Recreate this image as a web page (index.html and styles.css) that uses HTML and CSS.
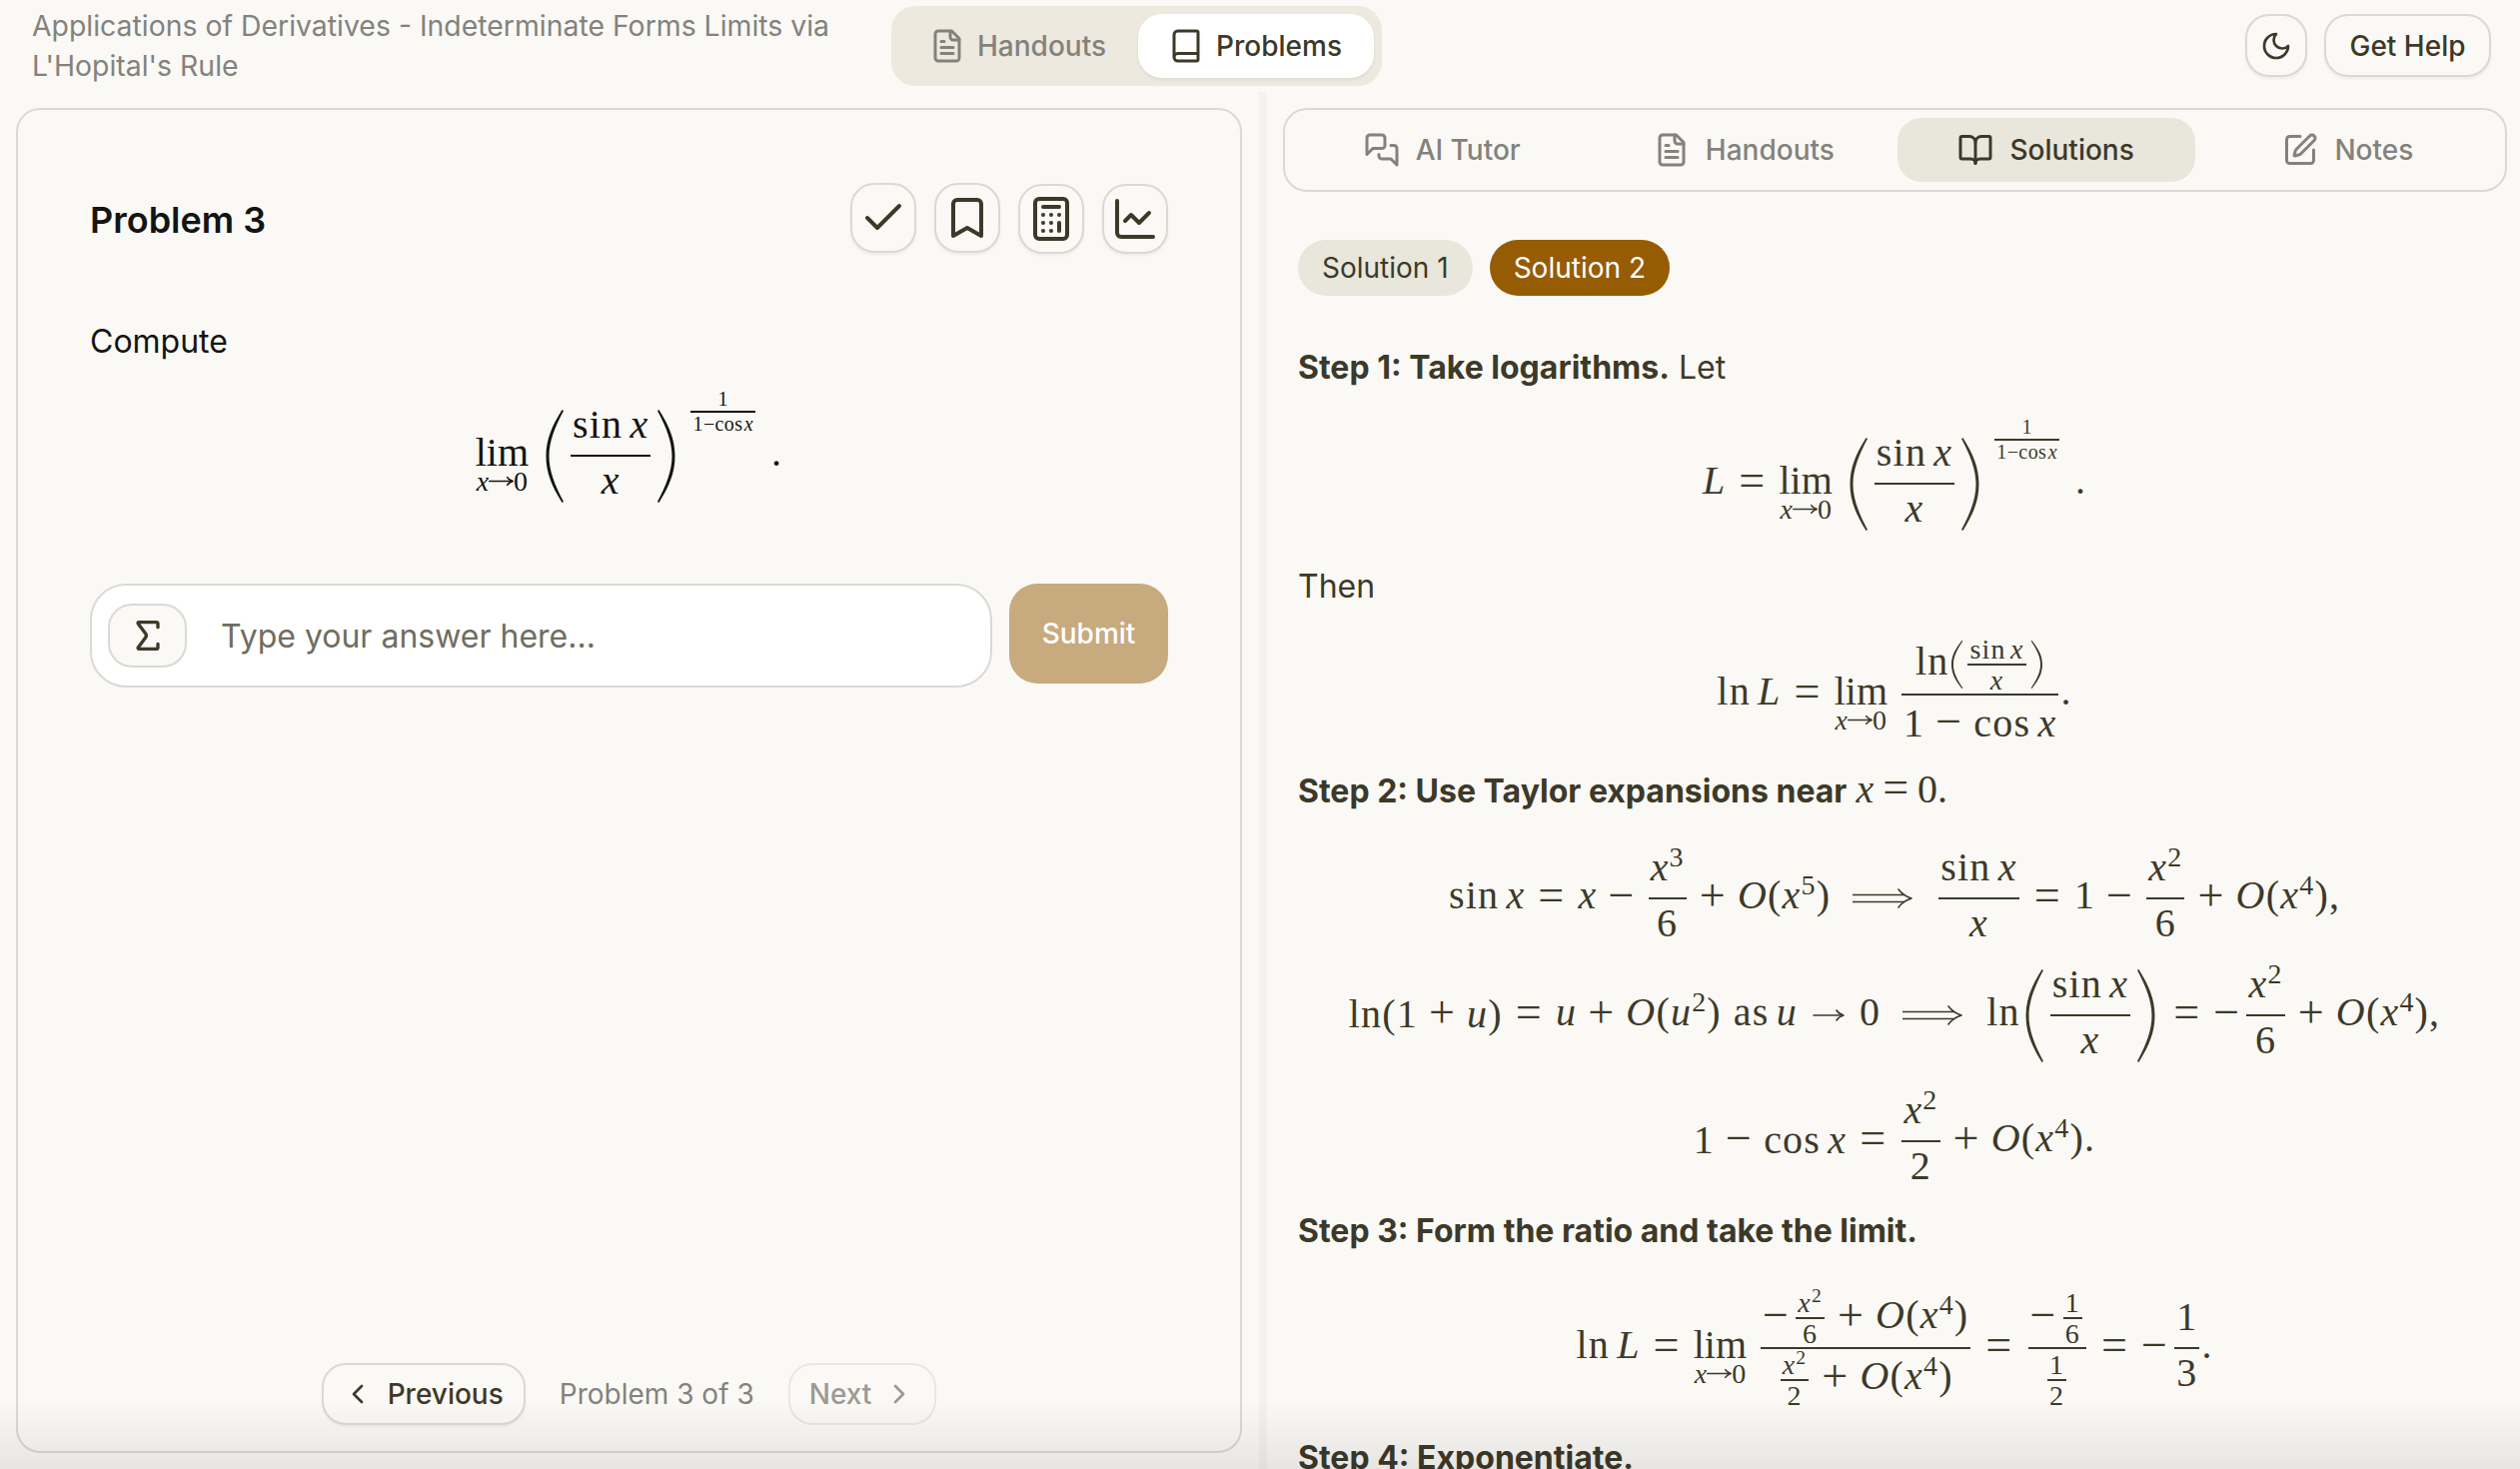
FILE: index.html
```html
<!DOCTYPE html>
<html lang="en">
<head>
    <meta charset="UTF-8">
    <meta name="viewport" content="width=device-width, initial-scale=1.0">
    <title>Problems</title>
    <link rel="stylesheet" href="styles.css">
</head>
<body>
    <!-- icon set -->
    <svg class="sprite" aria-hidden="true">
        <symbol id="i-file" viewBox="0 0 24 24"><path d="M15 2H6a2 2 0 0 0-2 2v16a2 2 0 0 0 2 2h12a2 2 0 0 0 2-2V7Z"/><path d="M14 2v4a2 2 0 0 0 2 2h4"/><path d="M10 9H8"/><path d="M16 13H8"/><path d="M16 17H8"/></symbol>
        <symbol id="i-book" viewBox="0 0 24 24"><path d="M4 19.5v-15A2.5 2.5 0 0 1 6.5 2H19a1 1 0 0 1 1 1v18a1 1 0 0 1-1 1H6.5a1 1 0 0 1 0-5H20"/></symbol>
        <symbol id="i-chat" viewBox="0 0 24 24"><path d="M14 9a2 2 0 0 1-2 2H6l-4 4V4a2 2 0 0 1 2-2h8a2 2 0 0 1 2 2z"/><path d="M18 9h2a2 2 0 0 1 2 2v11l-4-4h-6a2 2 0 0 1-2-2v-1"/></symbol>
        <symbol id="i-open" viewBox="0 0 24 24"><path d="M12 7v14"/><path d="M3 18a1 1 0 0 1-1-1V4a1 1 0 0 1 1-1h5a4 4 0 0 1 4 4 4 4 0 0 1 4-4h5a1 1 0 0 1 1 1v13a1 1 0 0 1-1 1h-6a3 3 0 0 0-3 3 3 3 0 0 0-3-3z"/></symbol>
        <symbol id="i-pen" viewBox="0 0 24 24"><path d="M12 3H5a2 2 0 0 0-2 2v14a2 2 0 0 0 2 2h14a2 2 0 0 0 2-2v-7"/><path d="M18.375 2.625a1 1 0 0 1 3 3l-9.013 9.014a2 2 0 0 1-.853.505l-2.873.84a.5.5 0 0 1-.62-.62l.84-2.873a2 2 0 0 1 .506-.852z"/></symbol>
        <symbol id="i-moon" viewBox="0 0 24 24"><path d="M12 3a6 6 0 0 0 9 9 9 9 0 1 1-9-9Z"/></symbol>
        <symbol id="i-check" viewBox="0 0 24 24"><path d="M20 6 9 17l-5-5"/></symbol>
        <symbol id="i-bookmark" viewBox="0 0 24 24"><path d="m19 21-7-4-7 4V5a2 2 0 0 1 2-2h10a2 2 0 0 1 2 2v16z"/></symbol>
        <symbol id="i-calc" viewBox="0 0 24 24"><rect x="4" y="2" width="16" height="20" rx="2"/><path d="M8 6h8"/><path d="M16 14v4"/><path d="M16 10h.01"/><path d="M12 10h.01"/><path d="M8 10h.01"/><path d="M12 14h.01"/><path d="M8 14h.01"/><path d="M12 18h.01"/><path d="M8 18h.01"/></symbol>
        <symbol id="i-chart" viewBox="0 0 24 24"><path d="M3 3v16a2 2 0 0 0 2 2h16"/><path d="m19 9-5 5-4-4-3 3"/></symbol>
        <symbol id="i-sigma" viewBox="0 0 24 24"><path d="M18 7V5a1 1 0 0 0-1-1H6.5a.5.5 0 0 0-.4.8l4.5 6a2 2 0 0 1 0 2.4l-4.5 6a.5.5 0 0 0 .4.8H17a1 1 0 0 0 1-1v-2"/></symbol>
        <symbol id="i-left" viewBox="0 0 24 24"><path d="m15 18-6-6 6-6"/></symbol>
        <symbol id="i-right" viewBox="0 0 24 24"><path d="m9 18 6-6-6-6"/></symbol>
        <symbol id="paren" viewBox="0 0 20 93" preserveAspectRatio="none"><path d="M17.500 0C7 17 1.500 30 1.500 46.500S7 76 17.500 93L19 92C10 75 4.500 61 4.500 46.500S10 18 19 1Z"/></symbol>
        <symbol id="implies" viewBox="0 0 60 22"><path d="M0 7.500h52M0 14.500h52"/><path d="M46 2c3 4 8 7.500 13 9-5 1.500-10 5-13 9"/></symbol>
        <symbol id="to" viewBox="0 0 32 14"><path d="M1 7h29"/><path d="M24 2c1.500 2.500 3.500 4 7 5-3.500 1-5.500 2.500-7 5"/></symbol>
    </svg>

    <header class="topbar">
        <div class="crumb">Applications of Derivatives - Indeterminate Forms Limits via L'Hopital's Rule</div>
        <div class="segment">
            <button class="segment-item"><svg class="ico"><use href="#i-file"/></svg>Handouts</button>
            <button class="segment-item active"><svg class="ico"><use href="#i-book"/></svg>Problems</button>
        </div>
        <div class="top-actions">
            <button class="btn btn-icon-top"><svg class="ico ico-moon"><use href="#i-moon"/></svg></button>
            <button class="btn btn-help">Get Help</button>
        </div>
    </header>

    <main class="workspace">
        <section class="col-left">
            <div class="problem-card">
                <div class="problem-head">
                    <h2>Problem 3</h2>
                    <div class="tools">
                        <button class="tool"><svg class="ico-lg"><use href="#i-check"/></svg></button>
                        <button class="tool"><svg class="ico-lg"><use href="#i-bookmark"/></svg></button>
                        <button class="tool tool-low"><svg class="ico-lg"><use href="#i-calc"/></svg></button>
                        <button class="tool tool-low"><svg class="ico-lg"><use href="#i-chart"/></svg></button>
                    </div>
                </div>
                <p class="compute">Compute</p>
                <div class="eq eq-problem">
                    <span class="math math-black">
                        <span class="lim"><span class="lim-top">lim</span><span class="lim-sub"><i>x</i><svg class="to-sm"><use href="#to"/></svg>0</span></span>
                        <svg class="big-paren"><use href="#paren"/></svg>
                        <span class="frac"><span class="num"><span class="t">sin <i>x</i></span></span><span class="bar"></span><span class="den"><i>x</i></span></span>
                        <svg class="big-paren flip"><use href="#paren"/></svg>
                        <span class="frac exp"><span class="num">1</span><span class="bar"></span><span class="den">1−cos <i>x</i></span></span>
                        <span class="t dot-end">.</span>
                    </span>
                </div>
                <div class="answer-row">
                    <div class="answer-box">
                        <button class="sigma"><svg class="ico-sigma"><use href="#i-sigma"/></svg></button>
                        <span class="placeholder">Type your answer here...</span>
                    </div>
                    <button class="submit">Submit</button>
                </div>
                <nav class="pager">
                    <button class="btn btn-page btn-prev"><svg class="ico-chev"><use href="#i-left"/></svg>Previous</button>
                    <span class="pager-label">Problem 3 of 3</span>
                    <button class="btn btn-page btn-off">Next<svg class="ico-chev"><use href="#i-right"/></svg></button>
                </nav>
            </div>
        </section>

        <div class="divider"></div>

        <section class="col-right">
            <div class="tabs">
                <button class="tab"><svg class="ico"><use href="#i-chat"/></svg>AI Tutor</button>
                <button class="tab"><svg class="ico"><use href="#i-file"/></svg>Handouts</button>
                <button class="tab active"><svg class="ico"><use href="#i-open"/></svg>Solutions</button>
                <button class="tab"><svg class="ico"><use href="#i-pen"/></svg>Notes</button>
            </div>
            <div class="solution">
                <div class="pills">
                    <button class="pill">Solution 1</button>
                    <button class="pill active">Solution 2</button>
                </div>

                <p class="line line-first"><b>Step 1: Take logarithms.</b> Let</p>

                <div class="eq eq-1">
                    <span class="math">
                        <span class="t"><i>L</i></span><span class="t rel">=</span>
                        <span class="lim"><span class="lim-top">lim</span><span class="lim-sub"><i>x</i><svg class="to-sm"><use href="#to"/></svg>0</span></span>
                        <svg class="big-paren"><use href="#paren"/></svg>
                        <span class="frac"><span class="num"><span class="t">sin <i>x</i></span></span><span class="bar"></span><span class="den"><i>x</i></span></span>
                        <svg class="big-paren flip"><use href="#paren"/></svg>
                        <span class="frac exp"><span class="num">1</span><span class="bar"></span><span class="den">1−cos <i>x</i></span></span>
                        <span class="t dot-end">.</span>
                    </span>
                </div>

                <p class="line">Then</p>

                <div class="eq eq-2">
                    <span class="math">
                        <span class="t">ln <i>L</i></span><span class="t rel">=</span>
                        <span class="lim"><span class="lim-top">lim</span><span class="lim-sub"><i>x</i><svg class="to-sm"><use href="#to"/></svg>0</span></span>
                        <span class="frac frac-main">
                            <span class="num row"><span class="t">ln</span><svg class="mid-paren"><use href="#paren"/></svg><span class="frac sm"><span class="num">sin <i>x</i></span><span class="bar"></span><span class="den"><i>x</i></span></span><svg class="mid-paren flip"><use href="#paren"/></svg></span>
                            <span class="bar"></span>
                            <span class="den row"><span class="t">1<span class="bin">−</span>cos <i>x</i></span></span>
                        </span>
                        <span class="t">.</span>
                    </span>
                </div>

                <p class="line line-step2"><b>Step 2: Use Taylor expansions near</b> <span class="inline-math"><i>x</i><span class="inline-rel">=</span>0.</span></p>

                <div class="eq eq-r1">
                    <span class="math">
                        <span class="t">sin <i>x</i></span><span class="t rel">=</span><span class="t"><i>x</i></span><span class="t bin">−</span>
                        <span class="frac"><span class="num"><i>x</i><sup>3</sup></span><span class="bar"></span><span class="den">6</span></span>
                        <span class="t bin">+</span><span class="t"><i>O</i>(<i>x</i><sup>5</sup>)</span>
                        <svg class="implies"><use href="#implies"/></svg>
                        <span class="frac"><span class="num"><span class="t">sin <i>x</i></span></span><span class="bar"></span><span class="den"><i>x</i></span></span>
                        <span class="t rel">=</span><span class="t">1</span><span class="t bin">−</span>
                        <span class="frac"><span class="num"><i>x</i><sup>2</sup></span><span class="bar"></span><span class="den">6</span></span>
                        <span class="t bin">+</span><span class="t"><i>O</i>(<i>x</i><sup>4</sup>),</span>
                    </span>
                </div>

                <div class="eq eq-r2">
                    <span class="math">
                        <span class="t">ln(1<span class="bin">+</span><i>u</i>)</span><span class="t rel">=</span><span class="t"><i>u</i></span><span class="t bin">+</span><span class="t"><i>O</i>(<i>u</i><sup>2</sup>)</span>
                        <span class="t as">as <i>u</i></span><svg class="to"><use href="#to"/></svg><span class="t">0</span>
                        <svg class="implies"><use href="#implies"/></svg>
                        <span class="t">ln</span><svg class="big-paren"><use href="#paren"/></svg>
                        <span class="frac"><span class="num"><span class="t">sin <i>x</i></span></span><span class="bar"></span><span class="den"><i>x</i></span></span>
                        <svg class="big-paren flip"><use href="#paren"/></svg>
                        <span class="t rel">=</span><span class="t neg">−</span>
                        <span class="frac"><span class="num"><i>x</i><sup>2</sup></span><span class="bar"></span><span class="den">6</span></span>
                        <span class="t bin">+</span><span class="t"><i>O</i>(<i>x</i><sup>4</sup>),</span>
                    </span>
                </div>

                <div class="eq eq-r3">
                    <span class="math">
                        <span class="t">1<span class="bin">−</span>cos <i>x</i></span><span class="t rel">=</span>
                        <span class="frac"><span class="num"><i>x</i><sup>2</sup></span><span class="bar"></span><span class="den">2</span></span>
                        <span class="t bin">+</span><span class="t"><i>O</i>(<i>x</i><sup>4</sup>).</span>
                    </span>
                </div>

                <p class="line line-step3"><b>Step 3: Form the ratio and take the limit.</b></p>

                <div class="eq eq-3">
                    <span class="math">
                        <span class="t">ln <i>L</i></span><span class="t rel">=</span>
                        <span class="lim"><span class="lim-top">lim</span><span class="lim-sub"><i>x</i><svg class="to-sm"><use href="#to"/></svg>0</span></span>
                        <span class="frac frac-main">
                            <span class="num row"><span class="t neg">−</span><span class="frac sm"><span class="num"><i>x</i><sup>2</sup></span><span class="bar"></span><span class="den">6</span></span><span class="t bin">+</span><span class="t"><i>O</i>(<i>x</i><sup>4</sup>)</span></span>
                            <span class="bar"></span>
                            <span class="den row"><span class="frac sm"><span class="num"><i>x</i><sup>2</sup></span><span class="bar"></span><span class="den">2</span></span><span class="t bin">+</span><span class="t"><i>O</i>(<i>x</i><sup>4</sup>)</span></span>
                        </span>
                        <span class="t rel">=</span>
                        <span class="frac frac-main">
                            <span class="num row"><span class="t neg">−</span><span class="frac sm"><span class="num">1</span><span class="bar"></span><span class="den">6</span></span></span>
                            <span class="bar"></span>
                            <span class="den row"><span class="frac sm"><span class="num">1</span><span class="bar"></span><span class="den">2</span></span></span>
                        </span>
                        <span class="t rel">=</span><span class="t neg">−</span>
                        <span class="frac"><span class="num">1</span><span class="bar"></span><span class="den">3</span></span>
                        <span class="t">.</span>
                    </span>
                </div>

                <p class="line line-step4"><b>Step 4: Exponentiate.</b></p>
            </div>
        </section>
    </main>

    <div class="bottom-fade"></div>
</body>
</html>
```

FILE: styles.css
```css
* {
    box-sizing: border-box;
}

html, body {
    height: 100%;
}

body {
    margin: 0;
    height: 100vh;
    overflow: hidden;
    display: flex;
    flex-direction: column;
    background: #faf9f5;
    color: #3d3929;
    font-family: Inter, "Noto Sans", sans-serif;
}

button {
    font-family: inherit;
    border: none;
    background: none;
    color: inherit;
    padding: 0;
}

svg {
    fill: none;
    stroke: currentColor;
    stroke-linecap: round;
    stroke-linejoin: round;
    stroke-width: 2;
    flex: none;
}

.sprite {
    display: none;
}

/* top bar */
.topbar {
    height: 92px;
    flex: none;
    display: flex;
    align-items: flex-start;
    padding: 6px 29px 0 32px;
}

.crumb {
    width: 860px;
    padding-right: 20px;
    font-size: 28.400px;
    line-height: 40px;
    color: #83827d;
}

.segment {
    display: flex;
    height: 80px;
    padding: 8px;
    border-radius: 24px;
    background: #ede9de;
}

.segment-item {
    display: flex;
    align-items: center;
    gap: 12px;
    padding: 0 32px 0 30px;
    border-radius: 24px;
    font-size: 28px;
    font-weight: 500;
    color: #83827d;
}

.segment-item.active {
    background: #fff;
    color: #3d3929;
    box-shadow: 0 2px 3px rgba(0, 0, 0, .06);
}

.ico {
    width: 36px;
    height: 36px;
}

.top-actions {
    margin-left: auto;
    display: flex;
    gap: 17px;
    padding-top: 8px;
}

.btn {
    border: 2px solid #dad9d4;
    border-radius: 24px;
    background: #faf9f5;
    box-shadow: 0 2px 3px rgba(0, 0, 0, .05);
    font-weight: 500;
}

.btn-icon-top {
    width: 62px;
    height: 63px;
    display: flex;
    align-items: center;
    justify-content: center;
}

.ico-moon {
    width: 32px;
    height: 32px;
}

.btn-help {
    width: 167px;
    height: 63px;
    font-size: 28px;
}

/* two columns */
.workspace {
    flex: 1;
    min-height: 0;
    display: grid;
    grid-template-columns: 1260px 8px 1fr;
}

.col-left {
    padding: 16px 17px 16px 16px;
    min-height: 0;
}

.divider {
    background: #f3f2ee;
}

.col-right {
    padding: 16px 13px 0 16px;
    min-height: 0;
    overflow: hidden;
}

/* left card */
.problem-card {
    height: 100%;
    display: flex;
    flex-direction: column;
    padding: 73px 72px 26px 72px;
    border: 2px solid #dad9d4;
    border-radius: 24px;
    color: #141413;
}

.problem-head {
    display: flex;
    align-items: flex-start;
    justify-content: space-between;
}

.problem-head h2 {
    margin: 10px 0 0;
    font-size: 36px;
    line-height: 54px;
    font-weight: 600;
}

.tools {
    display: flex;
    gap: 18px;
    color: #3d3929;
}

.tool {
    width: 66px;
    height: 70px;
    border: 2px solid #dad9d4;
    border-radius: 24px;
    background: #faf9f5;
    box-shadow: 0 2px 3px rgba(0, 0, 0, .05);
    display: flex;
    align-items: center;
    justify-content: center;
}

.tool-low {
    margin-top: 1px;
}

.ico-lg {
    width: 48px;
    height: 48px;
}

.compute {
    margin: 64px 0 0;
    font-size: 32px;
    line-height: 48px;
}

.eq-problem {
    margin-top: 26px;
    height: 128px;
}

.answer-row {
    display: flex;
    align-items: flex-start;
    gap: 17px;
    margin-top: 64px;
}

.answer-box {
    flex: 1;
    height: 104px;
    display: flex;
    align-items: center;
    gap: 34px;
    padding-left: 16px;
    border: 2px solid #dad9d4;
    border-radius: 36px;
    background: #fff;
}

.sigma {
    width: 79px;
    height: 64px;
    border: 2px solid #dad9d4;
    border-radius: 24px;
    background: #faf9f5;
    color: #3d3929;
    display: flex;
    align-items: center;
    justify-content: center;
}

.ico-sigma {
    width: 40px;
    height: 40px;
}

.placeholder {
    font-size: 32px;
    color: #6f6d62;
}

.submit {
    width: 159px;
    height: 100px;
    border-radius: 28px;
    background: #c8aa7f;
    color: #fff;
    font-size: 28px;
    font-weight: 500;
}

.pager {
    margin-top: auto;
    display: flex;
    align-items: center;
    justify-content: center;
    gap: 34px;
    color: #3d3929;
}

.btn-page {
    height: 62px;
    display: flex;
    align-items: center;
    gap: 12px;
    padding: 0 19px;
    font-size: 28px;
    color: #3d3929;
}

.btn-prev {
    gap: 14px;
    padding: 0 20px 0 18px;
}

.btn-off {
    color: #9b9a92;
    border-color: #e8e7e2;
    box-shadow: none;
}

.ico-chev {
    width: 32px;
    height: 32px;
}

.pager-label {
    font-size: 28px;
    color: #83827d;
}

/* right side */
.tabs {
    display: grid;
    grid-template-columns: repeat(4, 1fr);
    gap: 4px;
    height: 84px;
    padding: 8px;
    border: 2px solid #dad9d4;
    border-radius: 24px;
}

.tab {
    display: flex;
    align-items: center;
    justify-content: center;
    gap: 16px;
    border-radius: 24px;
    font-size: 28px;
    font-weight: 500;
    color: #83827d;
}

.tab.active {
    background: #e9e6dc;
    color: #3d3929;
}

.solution {
    padding: 0 16px 0 15px;
}

.pills {
    display: flex;
    gap: 17px;
    margin-top: 48px;
}

.pill {
    height: 56px;
    padding: 0 24px;
    border-radius: 28px;
    background: #e9e6dc;
    font-size: 28px;
}

.pill.active {
    background: #955c04;
    color: #fff;
}

.line {
    margin: 0;
    font-size: 32px;
    line-height: 48px;
}

.line b {
    font-weight: 700;
}

.line-first {
    margin-top: 48px;
}

.inline-math {
    font-family: "Liberation Serif", serif;
    font-size: 40px;
}

.inline-rel {
    font-size: 46px;
    margin: 0 9px;
}

/* math */
.eq {
    display: flex;
    align-items: center;
    justify-content: center;
    height: 128px;
}

.eq-1 {
    margin: 28px 0 15px;
}

.eq-2 {
    margin: 20px 0 5px;
}

.eq-r1 {
    height: 110px;
    margin-top: 28px;
}

.eq-r2 {
    height: 110px;
    margin-top: 7px;
}

.eq-r3 {
    height: 110px;
    margin-top: 16px;
}

.line-step3 {
    margin-top: 11px;
}

.eq-3 {
    margin: 29px 0 22px;
}

.math {
    display: inline-flex;
    align-items: center;
    font-family: "Liberation Serif", serif;
    font-size: 40px;
    line-height: 1;
    white-space: nowrap;
    letter-spacing: 1.200px;
    word-spacing: -4px;
}

.math-black {
    color: #141413;
}

.math sup {
    font-size: .7em;
    line-height: 0;
    vertical-align: .5em;
}

.row {
    display: inline-flex;
    align-items: center;
}

/* pulls the text up so the math axis sits on the fraction bar */
.t {
    padding-bottom: 7px;
    white-space: pre;
}

.rel,
.bin,
.neg {
    font-size: 46px;
}

.rel {
    margin: 0 13px;
}

.bin {
    margin: 0 11px;
}

.neg {
    margin-right: 4px;
}

.as {
    margin-left: 12px;
}

.frac {
    display: inline-grid;
    grid-template-rows: 1fr auto 1fr;
    justify-items: center;
    margin: 0 2px;
}

.frac .num {
    align-self: end;
    padding: 0 2px 10px;
}

.frac .den {
    align-self: start;
    padding: 4px 2px 0;
}

.bar {
    justify-self: stretch;
    height: 2px;
    background: currentColor;
}

.frac .t {
    padding-bottom: 0;
}

.frac .row .t {
    padding-bottom: 7px;
}

.frac-main > .num {
    padding-bottom: 1px;
}

.frac-main > .den {
    padding-top: 3px;
}

.frac.sm {
    font-size: 28px;
    line-height: .85;
}

.frac.sm .num {
    padding-bottom: 2px;
}

.frac.sm .den {
    padding-top: 3px;
}

.frac.exp {
    font-size: 20px;
    letter-spacing: .4px;
    margin: 0 0 88px 10px;
}

.frac.exp .num {
    padding-bottom: 2px;
}

.frac.exp .den {
    padding-top: 1px;
}

.dot-end {
    margin-left: 16px;
}

.lim {
    display: inline-grid;
    grid-template-rows: 1fr auto 1fr;
    justify-items: center;
    margin-right: 12px;
    letter-spacing: 0;
}

.lim-top {
    grid-row: 2;
    padding-bottom: 7px;
}

.lim-sub {
    grid-row: 3;
    display: flex;
    align-items: center;
    font-size: 28px;
    margin-top: -12px;
}

.to-sm {
    width: 25px;
    height: 11px;
}

.to {
    width: 32px;
    height: 14px;
    margin: 0 15px;
    stroke-width: 1.600;
}

.big-paren,
.mid-paren {
    fill: currentColor;
    stroke: none;
}

.big-paren {
    width: 20px;
    height: 93px;
    margin: 0 4px;
}

.mid-paren {
    width: 13px;
    height: 48px;
    margin: 0 2px;
}

.flip {
    transform: scaleX(-1);
}

.implies {
    width: 60px;
    height: 22px;
    margin: 0 24px 0 22px;
    stroke-width: 1.600;
}

/* grey fade at the bottom of the window */
.bottom-fade {
    position: absolute;
    left: 0;
    right: 0;
    bottom: 0;
    height: 70px;
    background: linear-gradient(rgba(0, 0, 0, 0), rgba(0, 0, 0, .08));
    pointer-events: none;
}
```
